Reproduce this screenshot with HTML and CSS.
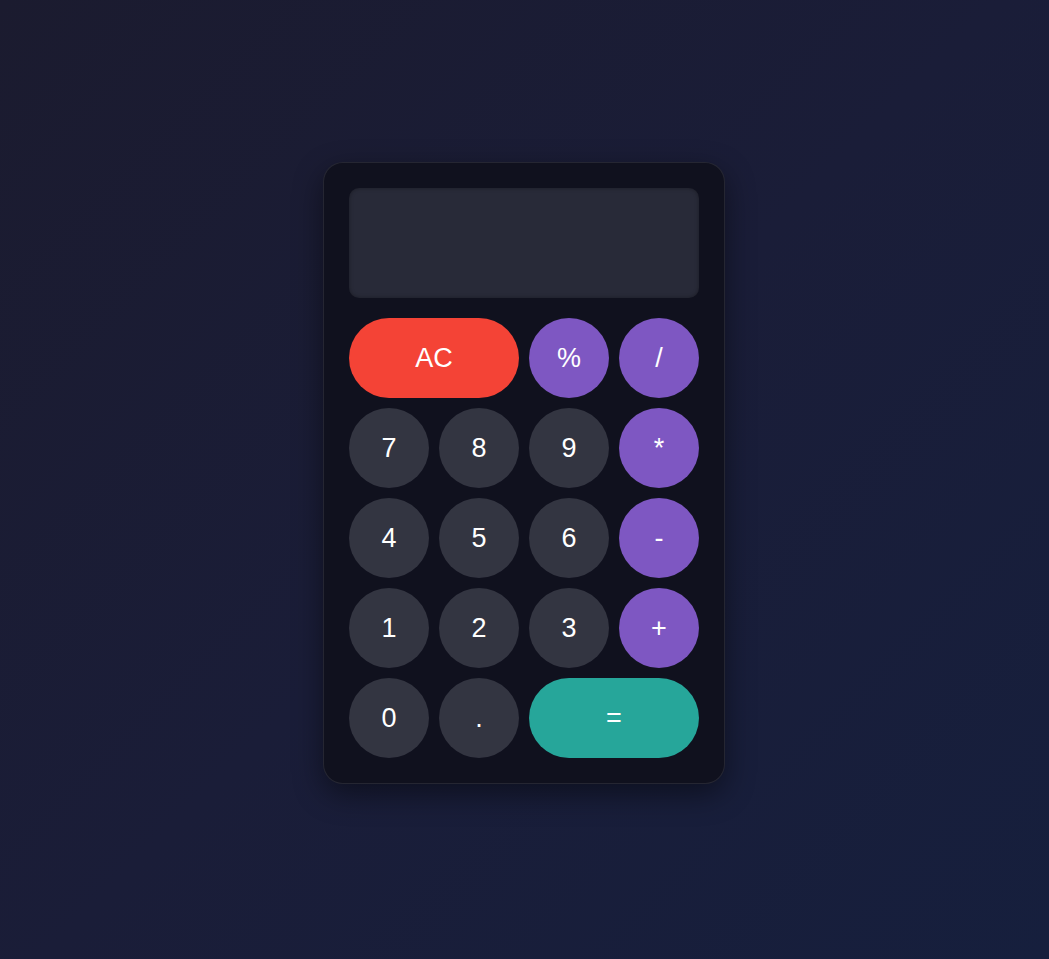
FILE: index.html
```html
<!DOCTYPE html>
<html>
<head>
<meta charset="utf-8">
<link rel="stylesheet" href="styles.css">
</head>
<body>
<div class="calc">
  <div class="display"></div>
  <div class="keys">
    <button class="key wide clear">AC</button>
    <button class="key op">%</button>
    <button class="key op">/</button>
    <button class="key">7</button>
    <button class="key">8</button>
    <button class="key">9</button>
    <button class="key op">*</button>
    <button class="key">4</button>
    <button class="key">5</button>
    <button class="key">6</button>
    <button class="key op">-</button>
    <button class="key">1</button>
    <button class="key">2</button>
    <button class="key">3</button>
    <button class="key op">+</button>
    <button class="key">0</button>
    <button class="key">.</button>
    <button class="key wide equals">=</button>
  </div>
</div>
</body>
</html>
```
FILE: styles.css
```css
html, body {
  margin: 0;
  padding: 0;
}
body {
  min-height: 100vh;
  background: linear-gradient(135deg, #1b1b2f 0%, #1a1d38 50%, #161f3d 100%);
  display: flex;
  justify-content: center;
  align-items: flex-start;
  padding-top: 162px;
  padding-right: 1px;
  box-sizing: border-box;
  font-family: "Liberation Sans", Arial, sans-serif;
}
.calc {
  width: 350px;
  padding: 25px;
  background: #10111e;
  border: 1px solid rgba(255, 255, 255, 0.09);
  border-radius: 20px;
  box-shadow: 0 10px 30px rgba(0, 0, 0, 0.45);
}
.display {
  height: 110px;
  background: #282a38;
  border-radius: 10px;
  box-shadow: inset 0 0 4px rgba(0, 0, 0, 0.35);
  margin-bottom: 20px;
}
.keys {
  display: grid;
  grid-template-columns: repeat(4, 80px);
  grid-auto-rows: 80px;
  gap: 10px;
}
.key {
  border: none;
  border-radius: 40px;
  background: #333541;
  color: #ffffff;
  font-family: "Liberation Sans", Arial, sans-serif;
  font-size: 27px;
  padding: 0;
  cursor: pointer;
}
.wide {
  grid-column: span 2;
}
.op {
  background: #7e57c2;
  font-weight: 500;
}
.clear {
  background: #f44336;
}
.equals {
  background: #26a69a;
  font-weight: 500;
}
```
